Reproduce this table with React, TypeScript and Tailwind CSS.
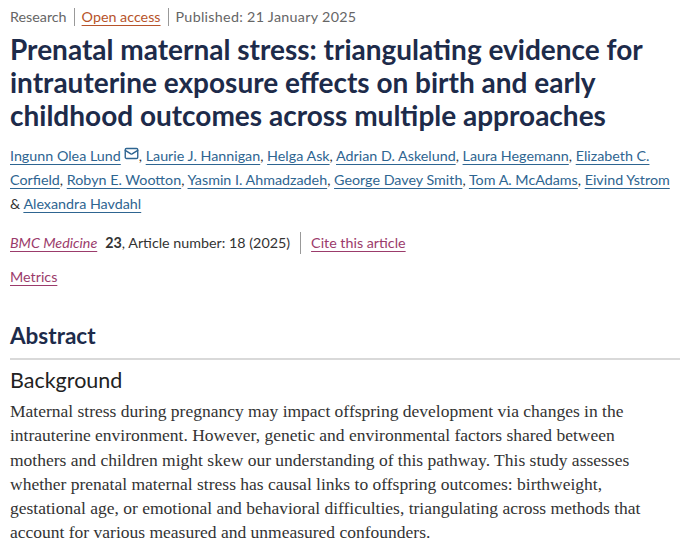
import { Mail } from 'lucide-react';

const AUTHORS = [
  'Ingunn Olea Lund', 'Laurie J. Hannigan', 'Helga Ask', 'Adrian D. Askelund',
  'Laura Hegemann', 'Elizabeth C. Corfield', 'Robyn E. Wootton', 'Yasmin I. Ahmadzadeh',
  'George Davey Smith', 'Tom A. McAdams', 'Eivind Ystrom', 'Alexandra Havdahl',
];

const ui = "font-['Lato',sans-serif]";
const link = 'underline decoration-1 underline-offset-[3px]';

export default function App() {
  return (
    <div className="w-[680px] h-[552px] overflow-hidden bg-white pl-[10px]">
      <div className={`${ui} flex items-center pt-[5px] text-[14.3px] leading-6 text-[#666]`}>
        <span>Research</span>
        <span className="mx-[7px] h-[18px] border-l border-[#999]" />
        <a className={`${link} text-[#b7532a]`}>Open access</a>
        <span className="mx-[7px] h-[18px] border-l border-[#999]" />
        <span className="tracking-[0.3px]">Published: 21 January 2025</span>
      </div>

      <h1 className="mt-[4px] font-['Lato',sans-serif] text-[28px] font-bold leading-[33px] text-[#1d2b4a]">
        Prenatal maternal stress: triangulating evidence for intrauterine exposure effects on birth and early childhood outcomes across multiple approaches
      </h1>

      <p className={`${ui} mt-[12px] text-[14.3px] leading-6 text-[#333]`}>
        {AUTHORS.map((a, i) => (
          <span key={a}>
            {i === AUTHORS.length - 1 && '& '}
            <a className={`${link} text-[#2e6591]`}>{a}</a>
            {i === 0 && <Mail className="inline h-[15px] w-[15px] ml-[3px] -mt-[8px] text-[#2e6591]" strokeWidth={2.2} />}
            {i < AUTHORS.length - 2 && ', '}
            {i === AUTHORS.length - 2 && ' '}
          </span>
        ))}
      </p>

      <div className={`${ui} mt-[15px] flex items-center text-[14.3px] leading-6 text-[#333]`}>
        <a className={`${link} italic text-[#9b3b6b]`}>BMC Medicine</a>
        <span className="ml-[8px] font-bold">23</span>
        <span>, Article number: 18 (2025)</span>
        <span className="mx-[10px] h-[22px] border-l border-[#999]" />
        <a className={`${link} text-[#9b3b6b]`}>Cite this article</a>
      </div>

      <div className={`${ui} mt-[10px] text-[14.3px] leading-6`}>
        <a className={`${link} text-[#9b3b6b]`}>Metrics</a>
      </div>

      <h2 className="mt-[33px] font-['Lato',sans-serif] text-[22.5px] font-bold leading-7 text-[#1d2b4a]">Abstract</h2>
      <div className="mt-[8px] h-[2px] bg-[#d9d9d9]" />

      <h3 className={`${ui} mt-[6px] text-[21.5px] leading-7 text-[#222]`}>Background</h3>
      <p className="mt-[5px] pr-[6px] font-['Liberation_Serif',serif] text-[17.5px] leading-[24.3px] text-[#333]">
        Maternal stress during pregnancy may impact offspring development via changes in the intrauterine environment. However, genetic and environmental factors shared between mothers and children might skew our understanding of this pathway. This study assesses whether prenatal maternal stress has causal links to offspring outcomes: birthweight, gestational age, or emotional and behavioral difficulties, triangulating across methods that account for various measured and unmeasured confounders.
      </p>
    </div>
  );
}
